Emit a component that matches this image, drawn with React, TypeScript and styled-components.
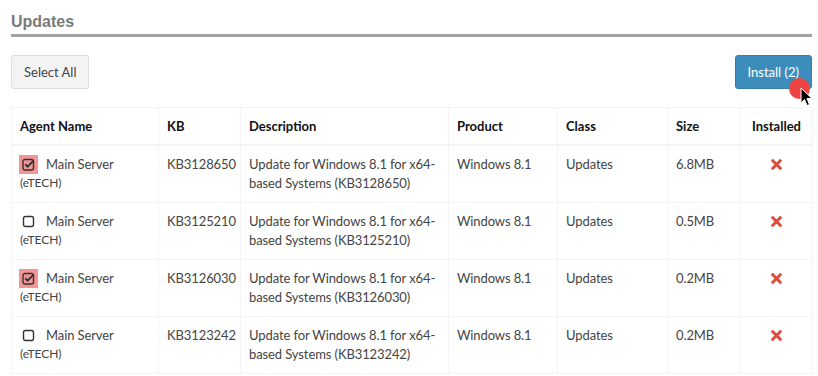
import React from "react";
import styled, { createGlobalStyle } from "styled-components";

const Global = createGlobalStyle`
  html, body { margin: 0; padding: 0; background: #fff; }
  body { font-family: Lato, "Noto Sans", sans-serif; color: #333; }
`;

const Page = styled.div`
  width: 801px;
  padding: 12px 0 0 11px;
  position: relative;
`;

const Title = styled.h3`
  margin: 0;
  font-family: "Liberation Sans", Arial, sans-serif;
  font-weight: bold;
  font-size: 16px;
  line-height: 20px;
  color: #7a7a7a;
  padding-bottom: 2px;
  border-bottom: 3px solid #a3a3a3;
`;

const Toolbar = styled.div`
  display: flex;
  justify-content: space-between;
  align-items: center;
  margin-top: 18px;
  margin-bottom: 18px;
`;

const Button = styled.button<{ $primary?: boolean }>`
  font-family: Lato, "Noto Sans", sans-serif;
  font-size: 13px;
  height: 34px;
  padding: 0 12px;
  border-radius: 3px;
  border: 1px solid ${(p) => (p.$primary ? "#367fa9" : "#ddd")};
  background: ${(p) => (p.$primary ? "#3c8dbc" : "#f4f4f4")};
  color: ${(p) => (p.$primary ? "#fff" : "#444")};
  cursor: pointer;
`;

const Table = styled.table`
  width: 801px;
  border-collapse: collapse;
  border: 1px solid #f4f4f4;
  table-layout: fixed;
  font-size: 13px;
`;

const Th = styled.th<{ $center?: boolean }>`
  text-align: ${(p) => (p.$center ? "center" : "left")};
  font-weight: bold;
  color: #111;
  padding: 9px 8px;
  line-height: 18px;
  border: 1px solid #f4f4f4;
  border-bottom: 2px solid #f4f4f4;
`;

const Td = styled.td<{ $center?: boolean }>`
  text-align: ${(p) => (p.$center ? "center" : "left")};
  vertical-align: top;
  color: #444;
  padding: 9px 8px 10px;
  line-height: 18.5px;
  letter-spacing: -0.1px;
  border: 1px solid #f4f4f4;
`;

const AgentLine = styled.div`
  display: flex;
  align-items: center;
  gap: 8px;
  margin-left: -1px;
`;

const CheckBox = styled.span<{ $checked?: boolean }>`
  display: inline-flex;
  align-items: center;
  justify-content: center;
  width: 19px;
  height: 19px;
  background: ${(p) => (p.$checked ? "#f39595" : "transparent")};
`;

const Sub = styled.div`
  font-size: 12px;
  line-height: 18px;
  color: #444;
`;

const Overlay = styled.div`
  position: absolute;
  left: 789px;
  top: 78px;
  width: 22px;
  height: 22px;
  pointer-events: none;
`;

const Dot = styled.div`
  width: 21px;
  height: 21px;
  border-radius: 50%;
  background: #f04444;
`;

const Cursor = styled.svg`
  position: absolute;
  left: 11px;
  top: 9px;
`;

const CheckedIcon = () => (
  <svg width="13" height="13" viewBox="0 0 13 13">
    <rect x="1" y="1.5" width="10.5" height="10.5" rx="2" fill="none" stroke="#333" strokeWidth="1.4" />
    <path d="M3.3 6.3 L5.6 8.6 L11.6 2.6" fill="none" stroke="#333" strokeWidth="2" />
  </svg>
);

const EmptyIcon = () => (
  <svg width="13" height="13" viewBox="0 0 13 13">
    <rect x="1.5" y="1.5" width="10" height="10" rx="2" fill="none" stroke="#333" strokeWidth="1.4" />
  </svg>
);

const XIcon = () => (
  <svg width="11" height="11" viewBox="0 0 11 11" style={{ marginTop: 4 }}>
    <path d="M1.8 1.8 L9.2 9.2 M9.2 1.8 L1.8 9.2" stroke="#dd4b39" strokeWidth="3" strokeLinecap="square" />
  </svg>
);

const rows = [
  { checked: true, kb: "KB3128650", size: "6.8MB" },
  { checked: false, kb: "KB3125210", size: "0.5MB" },
  { checked: true, kb: "KB3126030", size: "0.2MB" },
  { checked: false, kb: "KB3123242", size: "0.2MB" },
];

export default function App() {
  return (
    <Page>
      <Global />
      <Title>Updates</Title>
      <Toolbar>
        <Button>Select All</Button>
        <Button $primary>Install (2)</Button>
      </Toolbar>
      <Table>
        <colgroup>
          <col style={{ width: 147 }} />
          <col style={{ width: 82 }} />
          <col style={{ width: 208 }} />
          <col style={{ width: 109 }} />
          <col style={{ width: 110 }} />
          <col style={{ width: 73 }} />
          <col style={{ width: 72 }} />
        </colgroup>
        <thead>
          <tr>
            <Th>Agent Name</Th>
            <Th>KB</Th>
            <Th>Description</Th>
            <Th>Product</Th>
            <Th>Class</Th>
            <Th>Size</Th>
            <Th $center>Installed</Th>
          </tr>
        </thead>
        <tbody>
          {rows.map((r) => (
            <tr key={r.kb}>
              <Td>
                <AgentLine>
                  <CheckBox $checked={r.checked}>{r.checked ? <CheckedIcon /> : <EmptyIcon />}</CheckBox>
                  <span>Main Server</span>
                </AgentLine>
                <Sub>(eTECH)</Sub>
              </Td>
              <Td>{r.kb}</Td>
              <Td>Update for Windows 8.1 for x64-based Systems ({r.kb})</Td>
              <Td>Windows 8.1</Td>
              <Td>Updates</Td>
              <Td>{r.size}</Td>
              <Td $center>
                <XIcon />
              </Td>
            </tr>
          ))}
        </tbody>
      </Table>
      <Overlay>
        <Dot />
        <Cursor width="14" height="20" viewBox="0 0 14 20">
          <path d="M1 1 L1 16 L4.5 12.5 L7 18.5 L9.5 17.5 L7 11.5 L12 11.5 Z" fill="#000" stroke="#fff" strokeWidth="1" />
        </Cursor>
      </Overlay>
    </Page>
  );
}
